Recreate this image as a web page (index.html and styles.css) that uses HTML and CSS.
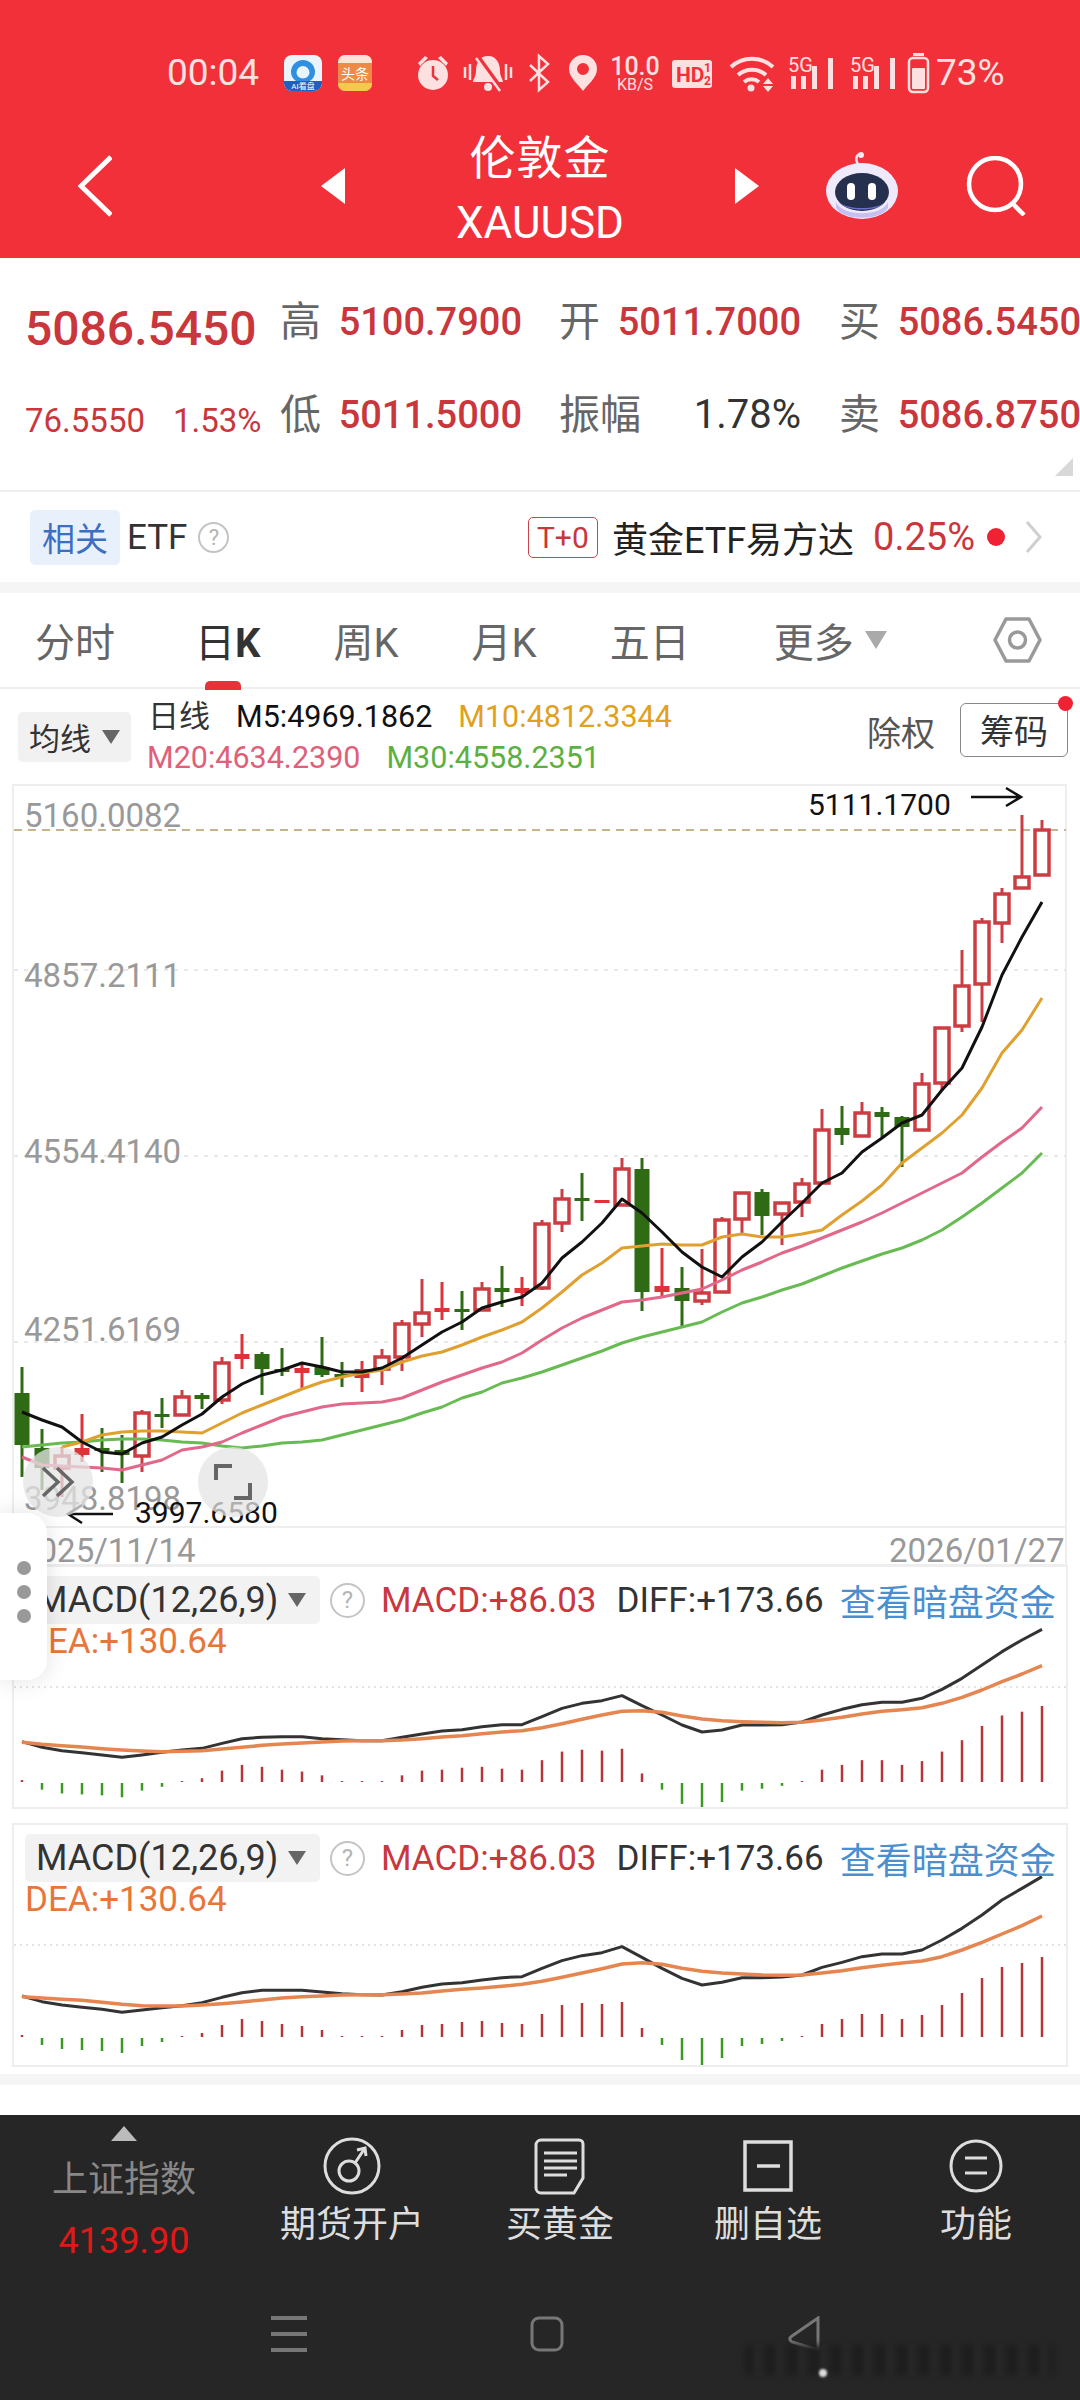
FILE: index.html
```html
<!DOCTYPE html>
<html lang="zh-CN">
<head>
  <meta charset="utf-8">
  <meta name="viewport" content="width=device-width, initial-scale=1">
  <title>伦敦金 XAUUSD</title>
  <link rel="stylesheet" href="styles.css">
</head>
<body>
  <div class="header">
    <div class="status-bar">
      <span class="status-time">00:04</span>
      <svg class="status-icons" viewBox="284 50 646 44" width="646" height="44">
        <rect x="284" y="55" width="38" height="36" rx="8" fill="#eaf4fc"/>
        <path d="M284 81h38v2a8 8 0 0 1-8 8h-22a8 8 0 0 1-8-8z" fill="#1f5fc4"/>
        <path d="M303 60a12 12 0 0 0-12 12c0 4 2 7 5 9h14c3-2 5-5 5-9a12 12 0 0 0-12-12zm0 6a6.500 6.500 0 0 1 6.500 6.500c0 3-3 6-6.500 6s-6.500-3-6.500-6a6.500 6.500 0 0 1 6.500-6.500z" fill="#2f8fe0"/>
        <text class="app-tiny" x="303" y="89" fill="#fff">AI看盘</text>
        <rect x="338" y="55" width="34" height="36" rx="7" fill="#ee8a45"/>
        <path d="M338 62a7 7 0 0 1 7-7h20a7 7 0 0 1 7 7v1h-34z" fill="#fbe3d6"/>
        <path d="M338 83h34v1a7 7 0 0 1-7 7h-20a7 7 0 0 1-7-7z" fill="#f5c94e"/>
        <text class="app-name" x="355" y="79" fill="#fff">头条</text>

        <g fill="#fde0e0" stroke="none">
          <circle cx="433" cy="75" r="15"/>
          <path d="M418 63l7-7 3 2-8 8zM448 63l-7-7-3 2 8 8z"/>
        </g>
        <path d="M433 66v10l5 4" fill="none" stroke="#f1303a" stroke-width="2.500"/>

        <path d="M488 56c-9 0-12 8-12 15 0 6-3 8-3 11h30c0-3-3-5-3-11 0-7-3-15-12-15z" fill="#fde0e0"/>
        <circle cx="488" cy="87" r="4" fill="#fde0e0"/>
        <path d="M477 56l24 33" stroke="#f1303a" stroke-width="5"/>
        <path d="M476 58l24 33" stroke="#fde0e0" stroke-width="2.500"/>
        <path d="M465 67v11M470 64v16M506 64v16M511 67v11" stroke="#fde0e0" stroke-width="2.500"/>

        <path d="M530 65l18 17-9 8V56l9 8-18 17" fill="none" stroke="#fde0e0" stroke-width="2.500"/>

        <path d="M583 55a14 14 0 0 0-14 14c0 9 10 16 14 22 4-6 14-13 14-22a14 14 0 0 0-14-14zm0 8a6 6 0 1 1 0 12 6 6 0 0 1 0-12z" fill="#fde0e0" fill-rule="evenodd"/>

        <text class="speed-top" x="635" y="75">10.0</text>
        <text class="speed-bottom" x="635" y="90">KB/S</text>

        <rect x="672" y="60" width="40" height="28" rx="3" fill="#fde0e0"/>
        <text class="hd-text" x="676" y="82">HD</text>
        <text class="hd-sub" x="704" y="72">1</text>
        <text class="hd-sub" x="704" y="85">2</text>

        <g fill="none" stroke="#fde0e0" stroke-width="4">
          <path d="M731 67a31 31 0 0 1 42 0"/>
          <path d="M738 75a21 21 0 0 1 28 0"/>
          <path d="M744 82a12 12 0 0 1 15 0"/>
        </g>
        <circle cx="751" cy="88" r="3.500" fill="#fde0e0"/>
        <path d="M768 78l5 6h-10zM768 92l5-6h-10z" fill="#fde0e0"/>

        <g fill="#fde0e0">
          <text class="net-text" x="788" y="72">5G</text>
          <rect x="791" y="76" width="5" height="13"/>
          <rect x="801" y="76" width="5" height="13"/>
          <rect x="812" y="66" width="5" height="23"/>
          <rect x="828" y="58" width="5" height="31"/>
          <text class="net-text" x="850" y="72">5G</text>
          <rect x="853" y="76" width="5" height="13"/>
          <rect x="863" y="76" width="5" height="13"/>
          <rect x="874" y="66" width="5" height="23"/>
          <rect x="890" y="58" width="5" height="31"/>
        </g>

        <rect x="909" y="58" width="19" height="34" rx="4" fill="none" stroke="#fde0e0" stroke-width="2.500"/>
        <rect x="913" y="53" width="11" height="3" fill="#fde0e0"/>
        <rect x="912" y="68" width="13" height="21" rx="1" fill="#fde0e0"/>
      </svg>
      <span class="status-battery">73%</span>
    </div>

    <div class="nav-bar">
      <svg class="nav-back" viewBox="0 0 34 62" width="34" height="62">
        <path d="M33 2L3 31l30 29" fill="none" stroke="#fff" stroke-width="5"/>
      </svg>
      <div class="nav-arrow nav-arrow-left"></div>
      <div class="nav-title">
        <div class="nav-title-name">伦敦金</div>
        <div class="nav-title-code">XAUUSD</div>
      </div>
      <div class="nav-arrow nav-arrow-right"></div>
      <svg class="nav-robot" viewBox="825 150 72 68" width="72" height="68">
        <path d="M857 162c-3-4-2-9 2-10" fill="none" stroke="#e9e4fa" stroke-width="2.500"/>
        <circle cx="860" cy="153" r="3" fill="#f5e9ef"/>
        <ellipse cx="861" cy="189" rx="36" ry="28" fill="#eeeafc"/>
        <path d="M835 200c6 15 46 15 52 0v6c-8 13-44 13-52 0z" fill="#c6bff0"/>
        <ellipse cx="861" cy="190" rx="27" ry="19" fill="#25304f"/>
        <path d="M838 200c8 8 38 8 46 0-6 10-40 10-46 0z" fill="#6d6fd0"/>
        <rect x="846" y="181" width="8" height="17" rx="4" fill="#fff"/>
        <rect x="867" y="181" width="8" height="17" rx="4" fill="#fff"/>
      </svg>
      <svg class="nav-search" viewBox="0 0 62 60" width="62" height="60">
        <circle cx="29" cy="28" r="26" fill="none" stroke="#fff" stroke-width="4.500"/>
        <path d="M46 47l12 12" fill="none" stroke="#fff" stroke-width="4.500"/>
      </svg>
    </div>
  </div>

  <div class="quote">
    <div class="quote-price">5086.5450</div>
    <div class="quote-cell"><span class="quote-label">高</span><span class="quote-value">5100.7900</span></div>
    <div class="quote-cell"><span class="quote-label">开</span><span class="quote-value">5011.7000</span></div>
    <div class="quote-cell"><span class="quote-label">买</span><span class="quote-value">5086.5450</span></div>

    <div class="quote-change"><span>76.5550</span><span>1.53%</span></div>
    <div class="quote-cell"><span class="quote-label">低</span><span class="quote-value">5011.5000</span></div>
    <div class="quote-cell"><span class="quote-label">振幅</span><span class="quote-value quote-value-plain">1.78%</span></div>
    <div class="quote-cell"><span class="quote-label">卖</span><span class="quote-value">5086.8750</span></div>
    <div class="quote-corner"></div>
  </div>

  <div class="etf-row">
    <span class="etf-chip">相关</span>
    <span class="etf-title">ETF</span>
    <span class="help-icon etf-help">?</span>
    <span class="etf-tag">T+0</span>
    <span class="etf-name">黄金ETF易方达</span>
    <span class="etf-change">0.25%</span>
    <span class="etf-dot"></span>
    <svg class="etf-more" viewBox="0 0 17 32" width="17" height="32">
      <path d="M2 1l13 15L2 31" fill="none" stroke="#cfcfcf" stroke-width="3"/>
    </svg>
  </div>
  <div class="band"></div>

  <div class="tabs">
    <span class="tab">分时</span>
    <span class="tab tab-active">日<b>K</b></span>
    <span class="tab">周K</span>
    <span class="tab">月K</span>
    <span class="tab">五日</span>
    <span class="tab tab-more">更多</span>
    <span class="tab-caret"></span>
    <svg class="tab-settings" viewBox="995 618 49 46" width="49" height="46">
      <path d="M1008 620h23l11 21-11 21h-23l-11-21z" fill="none" stroke="#999" stroke-width="3.500" stroke-linejoin="round"/>
      <circle cx="1019.500" cy="641" r="8" fill="none" stroke="#999" stroke-width="3.500"/>
    </svg>
  </div>

  <div class="ma-row">
    <div class="ma-chip">均线<span class="ma-caret"></span></div>
    <div class="ma-values">
      <div class="ma-line">
        <span class="ma-period">日线</span>
        <span class="ma-5">M5:4969.1862</span>
        <span class="ma-10">M10:4812.3344</span>
      </div>
      <div class="ma-line">
        <span class="ma-20">M20:4634.2390</span>
        <span class="ma-30">M30:4558.2351</span>
      </div>
    </div>
    <span class="ma-adjust">除权</span>
    <span class="ma-button">筹码</span>
  </div>

  <div class="charts">
    <svg id="kline" class="kline" viewBox="0 784 1080 781" width="1080" height="781">
      <rect x="13" y="785" width="1053" height="780" fill="none" stroke="#eee" stroke-width="2"/>
      <path class="grid-line" d="M14 970H1066M14 1156H1066M14 1342H1066"/>
      <path class="price-line" d="M14 830H1066"/>
      <path d="M14 1527H1066" stroke="#eee" stroke-width="2"/>
      <g id="candles"></g>
      <g id="averages"></g>
      <text class="axis-label" x="24" y="827">5160.0082</text>
      <text class="axis-label" x="24" y="987">4857.2111</text>
      <text class="axis-label" x="24" y="1163">4554.4140</text>
      <text class="axis-label" x="24" y="1341">4251.6169</text>
      <text class="axis-label" x="24" y="1510">3948.8198</text>
      <text class="axis-label" x="20" y="1562">2025/11/14</text>
      <text class="axis-label" x="889" y="1562">2026/01/27</text>
      <text class="mark-label" x="808" y="815">5111.1700</text>
      <path class="mark-arrow" d="M971 797h50M1006 788l15 9-15 9"/>
      <text class="mark-label" x="135" y="1523">3997.6580</text>
      <path class="mark-arrow" d="M113 1514H68M82 1505l-14 9 14 9"/>
    </svg>

    <div class="macd-panel">
      <svg id="macdOne" class="macd-plot" viewBox="14 1567 1052 240" width="1052" height="240"></svg>
      <div class="macd-legend">
        <div class="macd-line">
          <div class="macd-chip">MACD(12,26,9)<span class="ma-caret"></span></div>
          <span class="help-icon macd-help">?</span>
          <span class="macd-value">MACD:+86.03</span>
          <span class="diff-value">DIFF:+173.66</span>
          <span class="macd-link">查看暗盘资金</span>
        </div>
        <div class="dea-value">DEA:+130.64</div>
      </div>
    </div>

    <div class="macd-panel macd-panel-second">
      <svg id="macdTwo" class="macd-plot" viewBox="14 1825 1052 240" width="1052" height="240"></svg>
      <div class="macd-legend">
        <div class="macd-line">
          <div class="macd-chip">MACD(12,26,9)<span class="ma-caret"></span></div>
          <span class="help-icon macd-help">?</span>
          <span class="macd-value">MACD:+86.03</span>
          <span class="diff-value">DIFF:+173.66</span>
          <span class="macd-link">查看暗盘资金</span>
        </div>
        <div class="dea-value">DEA:+130.64</div>
      </div>
    </div>

    <div class="float-button float-collapse">
      <svg viewBox="0 0 34 32" width="34" height="32">
        <path d="M2 2l15 14L2 30M16 2l15 14-15 14" fill="none" stroke="#666" stroke-width="3.500"/>
      </svg>
    </div>
    <div class="float-button float-expand">
      <svg viewBox="0 0 38 36" width="38" height="36">
        <path d="M2 16V2h16M36 19v15H20" fill="none" stroke="#666" stroke-width="4"/>
      </svg>
    </div>
    <div class="side-handle">
      <span class="side-dot"></span>
      <span class="side-dot"></span>
      <span class="side-dot"></span>
    </div>
  </div>

  <div class="band band-bottom"></div>

  <div class="footer">
    <div class="tool-bar">
      <div class="index-cell">
        <span class="index-caret"></span>
        <span class="index-name">上证指数</span>
        <span class="index-value">4139.90</span>
      </div>
      <div class="tool-cell">
        <svg class="tool-icon" viewBox="0 0 60 60" width="60" height="60">
          <circle cx="30" cy="30" r="27" fill="none" stroke="#ddd" stroke-width="3"/>
          <circle cx="27" cy="35" r="10" fill="none" stroke="#ddd" stroke-width="3"/>
          <path d="M33 27l10-15M35 14l8-2 1 8" fill="none" stroke="#ddd" stroke-width="3"/>
        </svg>
        <span class="tool-label">期货开户</span>
      </div>
      <div class="tool-cell">
        <svg class="tool-icon" viewBox="0 0 60 60" width="60" height="60">
          <path d="M11 4h38a4 4 0 0 1 4 4v34l-9 15H11a5 5 0 0 1-5-5V9a5 5 0 0 1 5-5z" fill="none" stroke="#ddd" stroke-width="3"/>
          <path d="M14 17h33M14 25h33M14 32h33M14 39h23" stroke="#ddd" stroke-width="3"/>
        </svg>
        <span class="tool-label">买黄金</span>
      </div>
      <div class="tool-cell">
        <svg class="tool-icon" viewBox="0 0 60 60" width="60" height="60">
          <rect x="7" y="6" width="46" height="48" fill="none" stroke="#ddd" stroke-width="3.500"/>
          <path d="M19 30h23" stroke="#ddd" stroke-width="3.500"/>
        </svg>
        <span class="tool-label">删自选</span>
      </div>
      <div class="tool-cell">
        <svg class="tool-icon" viewBox="0 0 60 60" width="60" height="60">
          <circle cx="30" cy="30" r="25" fill="none" stroke="#ddd" stroke-width="3"/>
          <path d="M19 22h22M19 37h22" stroke="#ddd" stroke-width="3"/>
        </svg>
        <span class="tool-label">功能</span>
      </div>
    </div>

    <div class="system-nav">
      <svg viewBox="0 0 36 36" width="36" height="36">
        <path d="M0 2h36M0 18h36M0 34h36" stroke="#777" stroke-width="4"/>
      </svg>
      <svg viewBox="0 0 34 36" width="34" height="36">
        <rect x="2" y="2" width="30" height="32" rx="7" fill="none" stroke="#777" stroke-width="3"/>
      </svg>
      <svg viewBox="0 0 33 36" width="33" height="36">
        <path d="M31 2L5 20c-3 2-3 4 0 6l26 8z" fill="none" stroke="#777" stroke-width="3"/>
      </svg>
    </div>
    <div class="watermark"></div>
    <div class="watermark-spot"></div>
  </div>

  <script src="chart.js"></script>
</body>
</html>
```

FILE: styles.css
```css
body {
  width: 1080px;
  margin: 0;
  background: #fff;
  font-family: Roboto, "Noto Sans CJK SC", sans-serif;
  color: #333;
}

svg {
  display: block;
  flex-shrink: 0;
}

.header {
  height: 258px;
  padding-top: 50px;
  box-sizing: border-box;
  background: #f1303a;
}

.status-bar {
  display: flex;
  align-items: center;
  height: 44px;
  padding-left: 167px;
  color: #fde0e0;
  font-size: 37px;
}

.status-time {
  width: 117px;
}

.status-icons text {
  font-family: Roboto, "Noto Sans CJK SC", sans-serif;
}

.app-tiny {
  font-size: 8px;
  text-anchor: middle;
}

.app-name {
  font-size: 14px;
  text-anchor: middle;
}

.speed-top {
  font-size: 25px;
  font-weight: 500;
  fill: #fde0e0;
  text-anchor: middle;
}

.speed-bottom {
  font-size: 16px;
  fill: #fde0e0;
  text-anchor: middle;
}

.hd-text {
  font-size: 21px;
  font-weight: 700;
  fill: #f1303a;
}

.hd-sub {
  font-size: 12px;
  font-weight: 700;
  fill: #f1303a;
}

.net-text {
  font-size: 20px;
}

.status-battery {
  margin-left: 6px;
}

.nav-bar {
  display: flex;
  align-items: center;
  height: 144px;
  margin-top: 20px;
  color: #fff;
}

.nav-back {
  margin-left: 78px;
}

.nav-arrow {
  width: 0;
  height: 0;
  border-top: 18px solid transparent;
  border-bottom: 18px solid transparent;
}

.nav-arrow-left {
  margin-left: 209px;
  border-right: 24px solid #fff;
}

.nav-arrow-right {
  border-left: 24px solid #fff;
}

.nav-title {
  width: 390px;
  padding-top: 8px;
  text-align: center;
}

.nav-title-name {
  font-size: 46px;
  line-height: 50px;
  letter-spacing: 1px;
}

.nav-title-code {
  margin-top: 15px;
  font-size: 44px;
  line-height: 50px;
}

.nav-robot {
  margin-left: 67px;
}

.nav-search {
  margin-left: 68px;
}

.quote {
  position: relative;
  display: grid;
  grid-template-columns: 280px 279px 280px 1fr;
  grid-template-rows: 96px 90px;
  align-items: center;
  height: 234px;
  padding-top: 16px;
  box-sizing: border-box;
  border-bottom: 2px solid #eee;
}

.quote-price {
  margin: 14px 0 0 25px;
  color: #c9363c;
  font-size: 48px;
  font-weight: 500;
  line-height: 1;
}

.quote-change {
  display: flex;
  gap: 28px;
  margin: 10px 0 0 25px;
  color: #c9363c;
  font-size: 33px;
  line-height: 1;
}

.quote-cell {
  display: flex;
  align-items: center;
  justify-content: space-between;
  width: 242px;
}

.quote-label {
  color: #666;
  font-size: 41px;
  line-height: 1;
}

.quote-value {
  color: #c9363c;
  font-size: 38px;
  font-weight: 500;
  line-height: 1;
}

.quote-value-plain {
  color: #333;
  font-size: 40px;
  font-weight: 400;
}

.quote-corner {
  position: absolute;
  top: 200px;
  right: 7px;
  width: 0;
  height: 0;
  border-left: 18px solid transparent;
  border-bottom: 18px solid #d8d8d8;
}

.etf-row {
  display: flex;
  align-items: center;
  height: 90px;
  padding: 0 38px 0 30px;
  box-sizing: border-box;
}

.etf-chip {
  display: flex;
  align-items: center;
  justify-content: center;
  width: 90px;
  height: 55px;
  border-radius: 5px;
  background: #e8f0fb;
  color: #3a6fc4;
  font-size: 33px;
}

.etf-title {
  margin-left: 7px;
  font-size: 35px;
}

.help-icon {
  display: flex;
  align-items: center;
  justify-content: center;
  box-sizing: border-box;
  border: 2px solid #c4c4c4;
  border-radius: 50%;
  color: #b4b4b4;
}

.etf-help {
  width: 31px;
  height: 31px;
  margin-left: 11px;
  font-size: 22px;
}

.etf-tag {
  display: flex;
  align-items: center;
  justify-content: center;
  width: 70px;
  height: 41px;
  margin-left: auto;
  box-sizing: border-box;
  border: 1.500px solid #c9454a;
  border-radius: 5px;
  color: #c9363c;
  font-size: 30px;
}

.etf-name {
  margin-left: 14px;
  color: #222;
  font-size: 36px;
}

.etf-change {
  margin-left: 19px;
  color: #c9363c;
  font-size: 38px;
}

.etf-dot {
  width: 18px;
  height: 18px;
  margin-left: 12px;
  border-radius: 50%;
  background: #ee2233;
}

.etf-more {
  margin-left: 20px;
}

.band {
  height: 11px;
  background: #f5f5f5;
}

.band-bottom {
  margin-top: 7px;
}

.tabs {
  display: flex;
  align-items: center;
  gap: 73px;
  height: 96px;
  padding-left: 35px;
  box-sizing: border-box;
  border-bottom: 2px solid #eee;
}

.tab {
  position: relative;
  color: #666;
  font-size: 40px;
}

.tab-active {
  margin-left: 7px;
  color: #333;
}

.tab-active::after {
  content: "";
  position: absolute;
  bottom: -21px;
  left: 10px;
  width: 36px;
  height: 9px;
  border-radius: 5px 5px 0 0;
  background: #e3343c;
}

.tab-more {
  margin-left: 11px;
}

.tab-caret {
  width: 0;
  height: 0;
  margin-left: -62px;
  border-top: 18px solid #aaa;
  border-left: 11px solid transparent;
  border-right: 11px solid transparent;
}

.tab-settings {
  margin-left: 33px;
}

.ma-row {
  display: flex;
  align-items: center;
  height: 95px;
  padding: 0 12px 0 18px;
  box-sizing: border-box;
}

.ma-chip {
  display: flex;
  align-items: center;
  justify-content: space-between;
  width: 113px;
  height: 50px;
  padding: 0 11px;
  box-sizing: border-box;
  border-radius: 5px;
  background: #f1f1f1;
  font-size: 31px;
}

.ma-caret {
  width: 0;
  height: 0;
  border-top: 14px solid #666;
  border-left: 9px solid transparent;
  border-right: 9px solid transparent;
}

.ma-values {
  margin-left: 16px;
  font-size: 30.500px;
}

.ma-line {
  display: flex;
  gap: 26px;
  height: 41px;
  line-height: 41px;
}

.ma-period {
  margin-left: 1px;
  color: #333;
  font-size: 31px;
}

.ma-5 {
  color: #111;
}

.ma-10 {
  color: #e0a020;
}

.ma-20 {
  color: #e0607a;
}

.ma-30 {
  color: #5cb040;
}

.ma-adjust {
  margin: 0 25px 10px auto;
  color: #555;
  font-size: 34px;
}

.ma-button {
  position: relative;
  display: flex;
  align-items: center;
  justify-content: center;
  width: 108px;
  height: 54px;
  margin-bottom: 14px;
  box-sizing: border-box;
  border: 1.500px solid #888;
  border-radius: 6px;
  font-size: 34px;
}

.ma-button::after {
  content: "";
  position: absolute;
  top: -8px;
  right: -6px;
  width: 15px;
  height: 15px;
  border-radius: 50%;
  background: #ee2233;
}

.charts {
  position: relative;
}

.kline {
  overflow: visible;
}

.grid-line {
  fill: none;
  stroke: #e8e8e8;
  stroke-width: 2;
  stroke-dasharray: 4 6;
}

.price-line {
  fill: none;
  stroke: #c8b48c;
  stroke-width: 2;
  stroke-dasharray: 8 6;
}

.axis-label {
  fill: #999;
  font-size: 33px;
}

.mark-label {
  fill: #111;
  font-size: 30px;
}

.mark-arrow {
  fill: none;
  stroke: #111;
  stroke-width: 2.500;
}

.macd-panel {
  display: grid;
  height: 244px;
  margin: 0 12px;
  box-sizing: border-box;
  border: 2px solid #eee;
}

.macd-panel-second {
  margin-top: 14px;
}

.macd-plot {
  grid-area: 1 / 1;
}

.macd-legend {
  grid-area: 1 / 1;
  padding: 9px 0 0 11px;
}

.macd-line {
  display: flex;
  align-items: center;
  height: 48px;
}

.macd-chip {
  display: flex;
  align-items: center;
  justify-content: space-between;
  width: 295px;
  height: 48px;
  padding: 0 14px 0 11px;
  box-sizing: border-box;
  border-radius: 5px;
  background: #f2f2f2;
  font-size: 36px;
}

.macd-help {
  width: 35px;
  height: 35px;
  margin-left: 10px;
  font-size: 24px;
}

.macd-value {
  margin-left: 16px;
  color: #c8383e;
  font-size: 35px;
}

.diff-value {
  margin-left: 20px;
  font-size: 35px;
}

.macd-link {
  margin-left: 16px;
  color: #4a8fd0;
  font-size: 36px;
}

.dea-value {
  color: #e8763a;
  font-size: 35px;
  line-height: 36px;
}

.float-button {
  position: absolute;
  top: 663px;
  display: flex;
  align-items: center;
  justify-content: center;
  width: 70px;
  height: 70px;
  border-radius: 50%;
  background: rgba(228, 228, 228, 0.75);
}

.float-collapse {
  left: 23px;
}

.float-expand {
  left: 198px;
}

.side-handle {
  position: absolute;
  top: 729px;
  left: 0;
  display: flex;
  flex-direction: column;
  align-items: center;
  justify-content: center;
  gap: 10px;
  width: 47px;
  height: 167px;
  padding-bottom: 10px;
  box-sizing: border-box;
  border-radius: 0 20px 20px 0;
  background: #fff;
  box-shadow: 0 0 24px rgba(0, 0, 0, 0.12);
}

.side-dot {
  width: 14px;
  height: 14px;
  border-radius: 50%;
  background: #999;
}

.footer {
  position: relative;
  height: 285px;
  margin-top: 30px;
  background: #262626;
}

.tool-bar {
  display: grid;
  grid-template-columns: 248px repeat(4, 208px);
  height: 185px;
}

.index-cell {
  display: flex;
  flex-direction: column;
  align-items: center;
  padding-top: 11px;
  font-size: 36px;
  line-height: 36px;
}

.index-caret {
  width: 0;
  height: 0;
  border-bottom: 15px solid #bbb;
  border-left: 13px solid transparent;
  border-right: 13px solid transparent;
}

.index-name {
  margin-top: 21px;
  color: #888;
}

.index-value {
  margin-top: 25px;
  color: #e01818;
}

.tool-cell {
  display: flex;
  flex-direction: column;
  align-items: center;
  padding-top: 21px;
}

.tool-label {
  margin-top: 11px;
  color: #ddd;
  font-size: 36px;
  line-height: 36px;
}

.system-nav {
  display: flex;
  gap: 223px;
  padding: 16px 0 0 271px;
}

.watermark {
  position: absolute;
  top: 230px;
  left: 745px;
  width: 310px;
  height: 30px;
  background: repeating-linear-gradient(90deg, #1c1c1c 0 9px, #2a2a2a 9px 15px, #212121 15px 22px);
  filter: blur(3px);
}

.watermark-spot {
  position: absolute;
  top: 254px;
  left: 819px;
  width: 8px;
  height: 8px;
  border-radius: 50%;
  background: #ddd;
  filter: blur(1px);
}
```

FILE: chart.js
```js
var SVG_NS = 'http://www.w3.org/2000/svg';

// body top, body bottom, wick top, wick bottom, kind (h hollow, r red, g green)
var candles = [
  [1393, 1445, 1367, 1477, 'g'], [1448, 1468, 1429, 1490, 'g'], [1455, 1468, 1447, 1497, 'h'],
  [1448, 1455, 1414, 1462, 'r'], [1448, 1450, 1428, 1472, 'g'], [1450, 1455, 1435, 1483, 'g'],
  [1412, 1456, 1410, 1472, 'h'], [1414, 1416, 1398, 1428, 'g'], [1396, 1415, 1390, 1415, 'h'],
  [1395, 1399, 1393, 1409, 'g'], [1362, 1400, 1357, 1404, 'h'], [1354, 1359, 1334, 1369, 'r'],
  [1354, 1369, 1352, 1395, 'g'], [1369, 1371, 1348, 1376, 'g'], [1368, 1373, 1362, 1388, 'r'],
  [1367, 1375, 1337, 1377, 'g'], [1374, 1376, 1362, 1387, 'g'], [1369, 1378, 1361, 1392, 'r'],
  [1356, 1369, 1349, 1385, 'h'], [1323, 1357, 1320, 1371, 'h'], [1312, 1324, 1279, 1337, 'h'],
  [1308, 1312, 1282, 1320, 'r'], [1309, 1311, 1291, 1330, 'g'], [1288, 1310, 1282, 1310, 'h'],
  [1288, 1292, 1266, 1307, 'g'], [1288, 1293, 1277, 1306, 'r'], [1223, 1288, 1220, 1290, 'h'],
  [1198, 1223, 1189, 1232, 'h'], [1198, 1201, 1173, 1221, 'g'], [1200, 1203, 1200, 1203, 'r'],
  [1168, 1205, 1158, 1206, 'h'], [1169, 1292, 1158, 1311, 'g'], [1286, 1292, 1248, 1297, 'r'],
  [1288, 1301, 1267, 1326, 'g'], [1292, 1301, 1249, 1305, 'h'], [1219, 1292, 1217, 1292, 'h'],
  [1192, 1219, 1192, 1233, 'h'], [1192, 1216, 1189, 1235, 'g'], [1202, 1214, 1202, 1245, 'h'],
  [1183, 1202, 1178, 1217, 'h'], [1129, 1183, 1109, 1183, 'h'], [1128, 1135, 1106, 1145, 'g'],
  [1112, 1136, 1102, 1136, 'h'], [1112, 1117, 1107, 1137, 'g'], [1117, 1127, 1116, 1167, 'g'],
  [1083, 1130, 1073, 1130, 'h'], [1027, 1083, 1027, 1091, 'h'], [985, 1026, 950, 1032, 'h'],
  [921, 984, 918, 1022, 'h'], [893, 923, 888, 943, 'h'], [876, 888, 815, 888, 'h'],
  [829, 875, 820, 875, 'h']
];

var ma5 = [1412, 1420, 1427, 1442, 1452, 1454, 1443, 1437, 1425, 1414, 1397, 1384, 1375, 1370, 1363, 1367,
  1372, 1372, 1368, 1358, 1345, 1332, 1322, 1308, 1302, 1297, 1283, 1258, 1242, 1223, 1199, 1213, 1232,
  1252, 1267, 1277, 1257, 1242, 1222, 1203, 1183, 1173, 1152, 1138, 1123, 1115, 1090, 1068, 1027, 975, 937, 902];
var ma10 = [null, null, 1447, 1442, 1435, 1432, 1431, 1431, 1432, 1433, 1423, 1413, 1405, 1397, 1389, 1382,
  1377, 1373, 1370, 1362, 1356, 1352, 1345, 1337, 1330, 1322, 1308, 1292, 1275, 1263, 1248, 1246, 1244,
  1245, 1245, 1237, 1234, 1237, 1237, 1234, 1230, 1215, 1201, 1185, 1163, 1148, 1133, 1115, 1088, 1053, 1030, 998];
var ma20 = [1457, 1465, 1466, 1467, 1468, 1470, 1465, 1460, 1450, 1447, 1442, 1433, 1425, 1417, 1412, 1407,
  1404, 1403, 1402, 1398, 1390, 1382, 1375, 1368, 1362, 1353, 1340, 1328, 1318, 1310, 1302, 1300, 1297,
  1293, 1289, 1280, 1270, 1262, 1253, 1246, 1238, 1230, 1222, 1213, 1203, 1193, 1183, 1173, 1157, 1142, 1128, 1107];
var ma30 = [1447, 1445, 1443, 1442, 1440, 1439, 1439, 1440, 1442, 1443, 1446, 1448, 1446, 1443, 1442, 1440,
  1435, 1430, 1425, 1420, 1413, 1407, 1398, 1392, 1383, 1378, 1372, 1365, 1358, 1351, 1343, 1337, 1332,
  1327, 1322, 1312, 1303, 1297, 1290, 1284, 1276, 1268, 1261, 1254, 1248, 1240, 1230, 1217, 1203, 1188, 1173, 1153];

var bars = [2, -7, -11, -12, -13, -15, -8, -4, 1, 4, 12, 18, 16, 13, 11, 7, 1, 1, 1, 7, 12, 13, 15, 16, 14, 13,
  23, 32, 34, 33, 35, 9, -7, -22, -29, -20, -8, -6, -3, 1, 13, 18, 23, 23, 18, 22, 32, 44, 59, 70, 74, 80];

var diffOne = [725, 742, 752, 758, 765, 772, 765, 757, 750, 745, 730, 716, 712, 710, 710, 716, 719, 722, 722, 712,
  702, 693, 689, 680, 674, 674, 650, 625, 610, 602, 587, 617, 645, 675, 696, 690, 675, 675, 674, 666, 645, 628,
  614, 607, 607, 595, 568, 535, 495, 455, 420, 388];
var deaOne = [727, 733, 737, 741, 746, 750, 753, 755, 754, 752, 747, 742, 736, 732, 729, 726, 723, 722, 722, 720,
  716, 711, 707, 701, 696, 692, 683, 671, 658, 645, 634, 632, 637, 648, 657, 662, 665, 667, 668, 667, 660, 652,
  642, 634, 629, 623, 610, 592, 570, 545, 522, 497];
var diffTwo = [648, 665, 675, 682, 688, 697, 690, 683, 677, 668, 652, 638, 631, 631, 631, 636, 641, 644, 645, 635,
  622, 612, 608, 600, 593, 590, 565, 542, 527, 518, 500, 532, 565, 595, 615, 607, 593, 593, 591, 585, 562, 547,
  530, 522, 522, 510, 480, 445, 405, 360, 325, 290];
var deaTwo = [650, 654, 658, 661, 667, 673, 677, 678, 678, 675, 671, 666, 660, 654, 650, 648, 645, 644, 644, 642,
  639, 633, 628, 624, 619, 613, 604, 592, 579, 566, 552, 548, 553, 565, 574, 579, 582, 585, 586, 585, 579, 572,
  563, 556, 549, 543, 530, 510, 487, 462, 437, 408];

function xAt(i) {
  return 22 + 20 * i;
}

function add(parent, tag, attrs) {
  var el = document.createElementNS(SVG_NS, tag);
  for (var key in attrs) {
    el.setAttribute(key, attrs[key]);
  }
  parent.appendChild(el);
  return el;
}

function drawCandle(parent, c, i) {
  var x = xAt(i);
  var hollow = c[4] === 'h';
  var color = c[4] === 'g' ? '#2f6b14' : (hollow ? '#cb3d43' : '#dc3439');
  add(parent, 'line', { x1: x, x2: x, y1: c[2], y2: c[3], stroke: color, 'stroke-width': 3 });
  if (hollow) {
    add(parent, 'rect', {
      x: x - 7, y: c[0] + 1, width: 14, height: c[1] - c[0] - 1,
      fill: '#fff', stroke: color, 'stroke-width': 3.5
    });
  } else {
    add(parent, 'rect', { x: x - 7.5, y: c[0], width: 15, height: Math.max(c[1] - c[0], 3), fill: color });
  }
}

function drawLine(parent, values, color, width) {
  var points = [];
  values.forEach(function (v, i) {
    if (v !== null) {
      points.push(xAt(i) + ',' + v);
    }
  });
  add(parent, 'polyline', {
    points: points.join(' '), fill: 'none', stroke: color,
    'stroke-width': width, 'stroke-linejoin': 'round'
  });
}

function fromZoom(values, base) {
  return values.map(function (z) {
    return base + z / 3;
  });
}

function drawMacd(svg, diff, dea, zero, scale, gridY) {
  add(svg, 'path', {
    d: 'M14 ' + gridY + 'H1066', stroke: '#e4e4e4', 'stroke-width': 2, 'stroke-dasharray': '2 4'
  });
  bars.forEach(function (v, i) {
    var h = v * scale;
    add(svg, 'line', {
      x1: xAt(i), x2: xAt(i),
      y1: v > 0 ? zero : zero + 1,
      y2: v > 0 ? zero - h : zero + 1 - h,
      stroke: v > 0 ? '#b5353a' : '#3a9a20',
      'stroke-width': 2.5
    });
  });
  drawLine(svg, diff, '#333', 3);
  drawLine(svg, dea, '#e5854f', 3.5);
}

var candleGroup = document.getElementById('candles');
candles.forEach(function (c, i) {
  drawCandle(candleGroup, c, i);
});

var averages = document.getElementById('averages');
drawLine(averages, ma30, '#68bb52', 3);
drawLine(averages, ma20, '#e2688a', 3);
drawLine(averages, ma10, '#e0a030', 3);
drawLine(averages, ma5, '#111', 3);

drawMacd(document.getElementById('macdOne'), fromZoom(diffOne, 1500), fromZoom(deaOne, 1500), 1782, 0.95, 1687);
drawMacd(document.getElementById('macdTwo'), fromZoom(diffTwo, 1780), fromZoom(deaTwo, 1780), 2037, 1, 1945);
```
